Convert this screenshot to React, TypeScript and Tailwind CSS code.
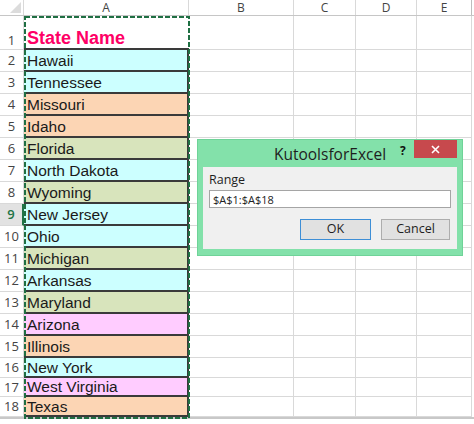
import React from "react";

type Row = { n: number; name: string; bg: string };

const rows: Row[] = [
  { n: 2, name: "Hawaii", bg: "bg-[#ccffff]" },
  { n: 3, name: "Tennessee", bg: "bg-[#ccffff]" },
  { n: 4, name: "Missouri", bg: "bg-[#fcd5b4]" },
  { n: 5, name: "Idaho", bg: "bg-[#fcd5b4]" },
  { n: 6, name: "Florida", bg: "bg-[#d8e4bc]" },
  { n: 7, name: "North Dakota", bg: "bg-[#ccffff]" },
  { n: 8, name: "Wyoming", bg: "bg-[#d8e4bc]" },
  { n: 9, name: "New Jersey", bg: "bg-[#ccffff]" },
  { n: 10, name: "Ohio", bg: "bg-[#ccffff]" },
  { n: 11, name: "Michigan", bg: "bg-[#d8e4bc]" },
  { n: 12, name: "Arkansas", bg: "bg-[#ccffff]" },
  { n: 13, name: "Maryland", bg: "bg-[#d8e4bc]" },
  { n: 14, name: "Arizona", bg: "bg-[#ffccff]" },
  { n: 15, name: "Illinois", bg: "bg-[#fcd5b4]" },
  { n: 16, name: "New York", bg: "bg-[#ccffff]" },
  { n: 17, name: "West Virginia", bg: "bg-[#ffccff]" },
  { n: 18, name: "Texas", bg: "bg-[#fcd5b4]" },
];

const heights: Record<number, string> = {
  16: "h-[20px]",
  17: "h-[19px]",
  18: "h-[20px]",
};

function EmptyCells() {
  return (
    <>
      <div className="w-[105px] shrink-0 border-r border-b border-[#d9d9d9]" />
      <div className="w-[62px] shrink-0 border-r border-b border-[#d9d9d9]" />
      <div className="w-[61px] shrink-0 border-r border-b border-[#d9d9d9]" />
      <div className="w-[55px] shrink-0 border-r border-b border-[#d9d9d9]" />
    </>
  );
}

export default function App() {
  return (
    <div className="relative w-[474px] h-[424px] bg-white overflow-hidden font-['Liberation_Sans',Arial,sans-serif]">
      {/* column headers */}
      <div className="flex h-[16px] border-b border-[#c6c6c6] text-[12px] text-[#444] font-['Open_Sans',sans-serif]">
        <div className="relative w-[24px] shrink-0 border-r border-[#d9d9d9]">
          <svg className="absolute right-[2px] bottom-[2px]" width="11" height="11" viewBox="0 0 11 11">
            <polygon points="11,0 11,11 0,11" fill="#dcdcdc" />
          </svg>
        </div>
        <div className="w-[165px] shrink-0 border-r border-[#d9d9d9] flex items-center justify-center leading-none">A</div>
        <div className="w-[105px] shrink-0 border-r border-[#d9d9d9] flex items-center justify-center leading-none">B</div>
        <div className="w-[62px] shrink-0 border-r border-[#d9d9d9] flex items-center justify-center leading-none">C</div>
        <div className="w-[61px] shrink-0 border-r border-[#d9d9d9] flex items-center justify-center leading-none">D</div>
        <div className="w-[55px] shrink-0 border-r border-[#bdbdbd] flex items-center justify-center leading-none">E</div>
      </div>

      {/* row 1 */}
      <div className="flex h-[34px]">
        <div className="w-[24px] shrink-0 border-r border-b border-[#d9d9d9] flex items-end justify-center pb-[2px] text-[13px] text-[#444] font-['Open_Sans',sans-serif] leading-none">
          1
        </div>
        <div className="w-[165px] shrink-0 border-b-2 border-[#3a3a3a] flex items-end pl-[3px] pb-[1px] text-[18px] font-bold text-[#ff0066] leading-none">
          State Name
        </div>
        <EmptyCells />
      </div>

      {rows.map((r) => {
        const h = heights[r.n] ?? "h-[22px]";
        const active = r.n === 9;
        return (
          <div key={r.n} className={`flex ${h}`}>
            <div
              className={`w-[24px] shrink-0 border-b border-[#d9d9d9] flex items-center justify-center text-[13px] font-['Open_Sans',sans-serif] leading-none ${
                active
                  ? "bg-[#e2e2e2] text-[#217346] font-semibold border-r-2 border-r-[#217346]"
                  : "text-[#444] border-r border-r-[#d9d9d9]"
              }`}
            >
              {r.n}
            </div>
            <div
              className={`w-[165px] shrink-0 border-b-2 border-r-2 border-[#3a3a3a] ${r.bg} flex items-center pl-[3px] pt-[1px] text-[15.5px] text-[#1a1a1a] leading-none`}
            >
              {r.name}
            </div>
            <EmptyCells />
          </div>
        );
      })}
      <div className="h-[6px] border-t-2 border-[#c8c8c8] bg-white" />

      {/* marching ants around A1:A18 */}
      <svg className="absolute left-[24px] top-[16px]" width="166" height="403" viewBox="0 0 166 403">
        <rect x="1" y="1" width="164" height="401" fill="none" stroke="#1f6f43" strokeWidth="2" strokeDasharray="5 2" />
      </svg>

      {/* dialog */}
      <div className="absolute left-[197px] top-[139px] w-[266px] h-[117px] bg-[#83e1aa] border border-[#6fd398] flex flex-col font-['Open_Sans',sans-serif]">
        <div className="relative h-[27px] shrink-0 flex items-center justify-center">
          <span className="text-[15.5px] text-[#1e1e1e] pt-[3px] leading-none">KutoolsforExcel</span>
          <span className="absolute left-[202px] top-[2px] text-[12px] font-bold text-[#111]">?</span>
          <div className="absolute right-[5px] top-0 w-[43px] h-[18px] bg-[#c7494d] flex items-center justify-center">
            <svg width="9" height="9" viewBox="0 0 9 9">
              <path d="M1 1 L8 8 M8 1 L1 8" stroke="#fff" strokeWidth="1.6" />
            </svg>
          </div>
        </div>
        <div className="mx-[5px] mb-[6px] flex-1 bg-[#f0f0f0] flex flex-col px-[6px] pt-[7px]">
          <div className="text-[12.5px] text-[#1e1e1e] leading-none h-[16px]">Range</div>
          <div className="h-[18px] bg-white border border-[#a5a5a5] flex items-center pl-[3px] text-[11px] text-[#222] leading-none">
            $A$1:$A$18
          </div>
          <div className="flex justify-end gap-[10px] mt-[11px] pr-[1px]">
            <div className="w-[71px] h-[21px] bg-[#e1e1e1] border border-[#3d8ed6] flex items-center justify-center text-[12.5px] text-[#1e1e1e] leading-none">
              OK
            </div>
            <div className="w-[69px] h-[21px] bg-[#e1e1e1] border border-[#adadad] flex items-center justify-center text-[12.5px] text-[#1e1e1e] leading-none">
              Cancel
            </div>
          </div>
        </div>
      </div>
    </div>
  );
}
